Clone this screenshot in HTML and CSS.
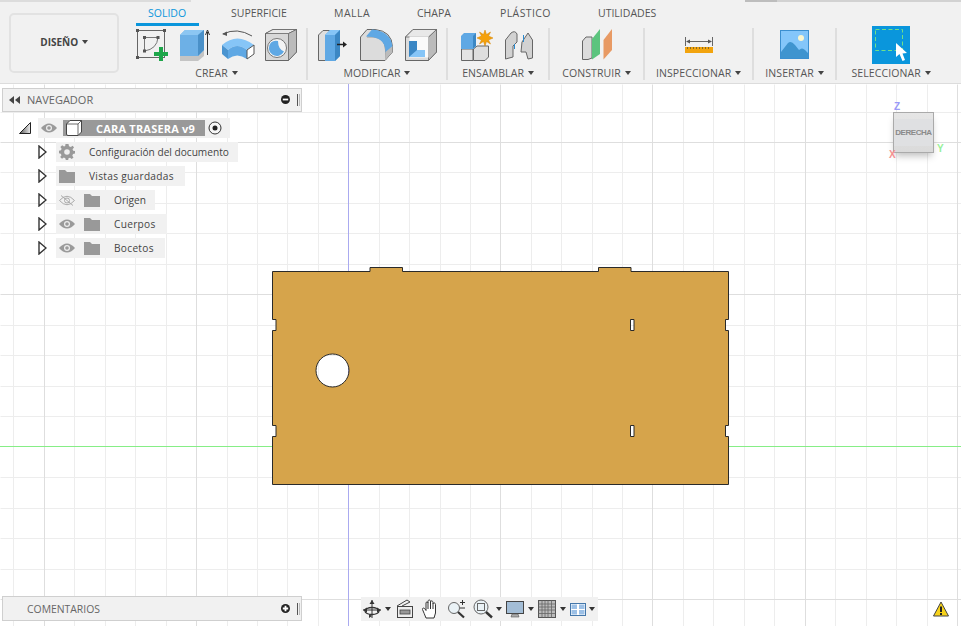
FILE: index.html
```html
<!DOCTYPE html>
<html lang="es">
<head>
<meta charset="utf-8">
<title>Diseño</title>
<link rel="stylesheet" href="styles.css">
</head>
<body>
<header class="toolbar">
  <button class="design-btn">DISEÑO <i class="caret"></i></button>
  <div class="tool-area">
    <nav class="tabs">
      <span class="tab active">SOLIDO</span>
      <span class="tab">SUPERFICIE</span>
      <span class="tab">MALLA</span>
      <span class="tab">CHAPA</span>
      <span class="tab">PLÁSTICO</span>
      <span class="tab">UTILIDADES</span>
    </nav>
    <div class="groups">
      <section class="group g-crear">
        <div class="icons">
          <svg class="ic" viewBox="133 26 36 38"><rect x="136.500" y="30.500" width="27" height="27" fill="none" stroke="#666" stroke-width="1"/><path d="M143.500 37.500H157Q156 49 143.500 51Z" fill="none" stroke="#777" stroke-width="1"/><g fill="#555"><rect x="135" y="29" width="3" height="3"/><rect x="162" y="29" width="3" height="3"/><rect x="135" y="56" width="3" height="3"/><rect x="142" y="36" width="3" height="3"/><rect x="155.500" y="36" width="3" height="3"/><rect x="142" y="49.500" width="3" height="3"/></g><path d="M158 47h4v5h5v4h-5v5h-4v-5h-5v-4h5z" fill="#1ea64a"/></svg>
          <svg class="ic" viewBox="176 26 36 38"><path d="M179 56L197 56L203 50V56L197 61H179Z" fill="#c4c4c4"/><path d="M179 35L184 30H203V50L197 56H179Z" fill="#6db0e6"/><path d="M179 35L184 30H203L197 35Z" fill="#8cc6f2"/><path d="M197 35L203 30V50L197 56Z" fill="#4a90c8"/><path d="M206.500 55V32M204.500 35L206.500 30L208.500 35" fill="none" stroke="#333" stroke-width="1"/></svg>
          <svg class="ic" viewBox="219 26 36 38"><path d="M222 34Q236 27 251 36" fill="none" stroke="#555" stroke-width="1"/><path d="M221 34L226 31.500L226 36Z" fill="#555"/><path d="M221 45Q236 32 253 45L246 50Q236 42 227 50Z" fill="#86c5f7"/><path d="M221 45L227 50V59L221 54Z" fill="#4a94d0"/><path d="M227 50Q236 42 246 50V59Q236 52 227 59Z" fill="#5fa8e4"/><path d="M246 50L253 45V54L246 59Z" fill="#fff" stroke="#555" stroke-width="1"/></svg>
          <svg class="ic" viewBox="262 26 36 38"><path d="M264.500 33.500L272 29.500H295.500V52L287.500 60.500H264.500Z" fill="#d8d8d8" stroke="#666"/><path d="M264.500 33.500L272 29.500H295.500L287.500 33.500Z" fill="#e8e8e8" stroke="#666" stroke-width=".8"/><path d="M287.500 33.500L295.500 29.500V52L287.500 60.500Z" fill="#bbb" stroke="#666" stroke-width=".8"/><circle cx="276" cy="48" r="9.500" fill="#f4f4f4" stroke="#777"/><path d="M270 42.500A8 8 0 1 0 283 51.500Q277 49 277 41A8 8 0 0 0 270 42.500Z" fill="#5fa8e4"/></svg>
        </div>
        <div class="label">CREAR <i class="caret"></i></div>
      </section>
      <div class="sep"></div>
      <section class="group g-mod">
        <div class="icons">
          <svg class="ic" viewBox="316 26 36 38"><path d="M319.500 35L324 30.500H331V60.500H319.500Z" fill="#dedede" stroke="#666"/><path d="M326 35L331 30H341V56L336 61H326Z" fill="#5fa8e4"/><path d="M326 35L331 30H341L336 35Z" fill="#86c5f7"/><path d="M336 35L341 30V56L336 61Z" fill="#3b87c4"/><path d="M338 44.500H345" stroke="#222" stroke-width="1.500"/><path d="M344 41.500L348 44.500L344 47.500Z" fill="#222"/></svg>
          <svg class="ic" viewBox="360 26 36 38"><path d="M361.500 37L368 29.500H376Q393 31 393.500 47V52L386 60.500H361.500Z" fill="#dcdcdc" stroke="#666"/><path d="M368 37H375Q386 38 386.500 50V60" fill="none" stroke="#999"/><path d="M373 29.500Q392 31 393.500 47L386.500 53Q387 39 373 37L367 36.500Z" fill="#5fa8e4"/><path d="M386.500 52L393.500 46V52L386 60.500Z" fill="#bbb"/></svg>
          <svg class="ic" viewBox="402 26 36 38"><path d="M404.500 37L412 29.500H435.500V52L427.500 60.500H404.500Z" fill="#dcdcdc" stroke="#666"/><path d="M427.500 37L435.500 29.500V52L427.500 60.500Z" fill="#bbb" stroke="#666" stroke-width=".8"/><path d="M404.500 37L412 29.500H435.500L427.500 37Z" fill="#e8e8e8" stroke="#666" stroke-width=".8"/><rect x="408.500" y="36.500" width="19" height="21" fill="#fafafa"/><path d="M408 41H416V50H424V57H408Z" fill="#3b87c4"/><path d="M416 50H424V57H408Z" fill="#86c5f7"/></svg>
        </div>
        <div class="label">MODIFICAR <i class="caret"></i></div>
      </section>
      <div class="sep"></div>
      <section class="group g-ens">
        <div class="icons">
          <svg class="ic" viewBox="459 26 36 38"><path d="M461.500 49H473V60.500H461.500Z" fill="#e4e4e4" stroke="#666"/><path d="M473.500 49L477 46H488.500V57L485 60.500H473.500Z" fill="#dedede" stroke="#666"/><path d="M461 36L464 33H476V46L473 49H461Z" fill="#5fa8e4"/><path d="M473 36L476 33V46L473 49Z" fill="#3b87c4"/><path d="M485 30L486.500 34.500L490.500 32L488.500 36L493 38L488.500 40L490.500 44L486.500 41.500L485 46L483.500 41.500L479.500 44L481.500 40L477 38L481.500 36L479.500 32L483.500 34.500Z" fill="#f5a10a" stroke="#d08000" stroke-width=".5"/></svg>
          <svg class="ic" viewBox="503 26 36 38"><path d="M506.500 40L512 33Q516 30 518 34V42L514 46V57L506.500 59Z" fill="#d2d2d2" stroke="#666"/><path d="M523 42L529 33L533.500 40V58L529 59L527 52H522Z" fill="#d2d2d2" stroke="#666"/><path d="M515.500 44V49M524.500 35V42" stroke="#2a8ad0" stroke-width="1"/></svg>
        </div>
        <div class="label">ENSAMBLAR <i class="caret"></i></div>
      </section>
      <div class="sep"></div>
      <section class="group g-con">
        <div class="icons">
          <svg class="ic" viewBox="579 26 36 38"><path d="M582.500 41L586 37H592V58L588 59.500H582.500Z" fill="#dcdcdc" stroke="#666"/><path d="M592 39L600 29V54L592 59.500Z" fill="#5cc47e"/><path d="M603.500 40L612 29V50L603.500 59.500Z" fill="#e89a64"/></svg>
        </div>
        <div class="label">CONSTRUIR <i class="caret"></i></div>
      </section>
      <div class="sep"></div>
      <section class="group g-ins">
        <div class="icons">
          <svg class="ic" viewBox="680 26 36 38"><path d="M684.500 37V46M711.500 37V46M686 41.500H710" stroke="#666" stroke-width="1" fill="none"/><path d="M689 39.500L685 41.500L689 43.500ZM707 39.500L711 41.500L707 43.500Z" fill="#555"/><rect x="684" y="47" width="28" height="6" fill="#f2a40e"/><path d="M686.500 47v2M689.500 47v2M692.500 47v2M695.500 47v2M698.500 47v2M701.500 47v2M704.500 47v2M707.500 47v2" stroke="#8a6a20" stroke-width="1"/></svg>
        </div>
        <div class="label">INSPECCIONAR <i class="caret"></i></div>
      </section>
      <div class="sep"></div>
      <section class="group g-ind">
        <div class="icons">
          <svg class="ic" viewBox="777 26 36 38"><rect x="780.500" y="30.500" width="28" height="28" fill="#84c6fa" stroke="#3b8fd0"/><circle cx="801" cy="38" r="3" fill="#fbf6cf"/><path d="M781 52L788 43Q791 40 795 45L799 50Q802 47 805 50L808 53V58H781Z" fill="#3f94cf"/></svg>
        </div>
        <div class="label">INSERTAR <i class="caret"></i></div>
      </section>
      <div class="sep"></div>
      <section class="group g-sel">
        <div class="icons">
          <svg class="ic ic-sel" viewBox="872 26 38 38"><rect x="872" y="26" width="38" height="38" fill="#0a96dc"/><rect x="875.500" y="29.500" width="27" height="21" fill="none" stroke="#6fe08a" stroke-width="1" stroke-dasharray="4 2.500"/><path d="M896 43V57L899.500 54L902.500 61L905 60L902.500 53.500L907 53Z" fill="#fff"/></svg>
        </div>
        <div class="label">SELECCIONAR <i class="caret"></i></div>
      </section>
    </div>
  </div>
</header>

<main class="viewport">
  <svg class="scene" viewBox="0 84 961 542">
    <path class="grid-minor" d="M13 84V626M74 84V626M105 84V626M135 84V626M166 84V626M227 84V626M257 84V626M287 84V626M318 84V626M379 84V626M409 84V626M440 84V626M470 84V626M531 84V626M561 84V626M592 84V626M622 84V626M683 84V626M713 84V626M744 84V626M774 84V626M835 84V626M866 84V626M896 84V626M927 84V626M0 112H961M0 172H961M0 203H961M0 233H961M0 264H961M0 325H961M0 355H961M0 386H961M0 416H961M0 477H961M0 508H961M0 538H961M0 569H961" transform="translate(.5 .5)"/>
    <path class="grid-major" d="M44 84V626M196 84V626M500 84V626M652 84V626M805 84V626M957 84V626M0 142H961M0 294H961M0 599H961" transform="translate(.5 .5)"/>
    <path class="axis-green" d="M0 446.500H961"/>
    <path class="axis-blue" d="M348.500 84V626"/>
    <path class="part" fill-rule="evenodd" d="M272.500 271.500H370V267.500H402.500V271.500H598.500V267.500H631V271.500H728.500V319.500H725.500V330.500H728.500V425.500H725.500V436.500H728.500V484.500H272.500V436.500H276V425.500H272.500V330.500H276V319.500H272.500Z M630.500 319.500V330.500H634V319.500Z M630.500 425.500V436.500H634V425.500Z M349 370.500A16.500 16.500 0 1 0 316 370.500A16.500 16.500 0 1 0 349 370.500Z"/>
  </svg>

  <aside class="nav-panel panel">
    <svg class="i-rew" viewBox="0 0 12 8"><path d="M6 0V8L1 4ZM12 0V8L7 4Z"/></svg>
    <span class="panel-title">NAVEGADOR</span>
    <svg class="i-pm" viewBox="0 0 10 10"><circle cx="5" cy="5" r="5"/><rect x="2" y="4" width="6" height="2" fill="#fff"/></svg>
    <i class="grip"></i>
  </aside>

  <div class="tree">
    <div class="root-row">
      <svg class="root-tri" viewBox="0 0 12 12"><defs><linearGradient id="tri" x1="0" x2="1" y1="0" y2="0"><stop offset="0" stop-color="#555"/><stop offset="1" stop-color="#eee"/></linearGradient></defs><path d="M.5 11.500L11.500 .5V11.500Z" fill="url(#tri)" stroke="#222"/></svg>
      <div class="root-pill">
        <svg class="i-eye" viewBox="0 0 16 10"><path d="M0 5Q8 -4 16 5Q8 14 0 5Z" fill="#9a9a9a"/><circle cx="8" cy="5" r="3" fill="#eee"/><circle cx="8" cy="5" r="1.800" fill="#9a9a9a"/></svg>
        <div class="root-name">
          <svg class="i-cube" viewBox="0 0 16 16"><path d="M.5 4L4 .5H15.500V12L12 15.500H2Q.5 15.500 .5 14Z" fill="#fff" stroke="#444"/><path d="M.5 4H12V15.500M12 4L15.500 .5" fill="none" stroke="#444" stroke-width=".8"/></svg>
          <span>CARA TRASERA v9</span>
        </div>
        <svg class="i-radio" viewBox="0 0 14 14"><circle cx="7" cy="7" r="6" fill="#f6f6f6" stroke="#333"/><circle cx="7" cy="7" r="2.500" fill="#222"/></svg>
      </div>
    </div>
    <div class="row">
      <svg class="exp" viewBox="0 0 9 14"><path d="M1 1L8 7L1 13Z"/></svg>
      <div class="pill">
        <svg class="i-gear" viewBox="0 0 16 16"><path d="M6.500 0H9.500L10 2.300L11.800 3L13.700 1.700L15 3.500L13.500 5.200L14.200 6.700L16 7V9.500L14 10L13.300 11.700L14.500 13.500L12.700 15L11 13.700L9.500 14.300L9.200 16H6.800L6.300 14.200L4.800 13.600L3 14.800L1.200 13L2.500 11.200L1.800 9.700L0 9.300V6.700L2 6.200L2.600 4.700L1.400 3L3.200 1.300L5 2.500L6.200 2Z" fill="#999"/><circle cx="8" cy="8" r="2.800" fill="#eee"/></svg>
        <span class="pill-text">Configuración del documento</span>
      </div>
    </div>
    <div class="row">
      <svg class="exp" viewBox="0 0 9 14"><path d="M1 1L8 7L1 13Z"/></svg>
      <div class="pill">
        <svg class="i-folder" viewBox="0 0 16 13"><path d="M0 0H6L8 2H16V13H0Z" fill="#999"/></svg>
        <span class="pill-text wide">Vistas guardadas</span>
      </div>
    </div>
    <div class="row">
      <svg class="exp" viewBox="0 0 9 14"><path d="M1 1L8 7L1 13Z"/></svg>
      <div class="pill">
        <svg class="i-eye-off" viewBox="0 0 16 11"><path d="M.5 5.500Q8 -3 15.500 5.500Q8 14 .5 5.500Z" fill="none" stroke="#aaa"/><circle cx="8" cy="5.500" r="2.500" fill="none" stroke="#aaa"/><path d="M2 .5L14 10.500" stroke="#aaa"/></svg>
        <svg class="i-folder" viewBox="0 0 16 13"><path d="M0 0H6L8 2H16V13H0Z" fill="#999"/></svg>
        <span class="pill-text">Origen</span>
      </div>
    </div>
    <div class="row">
      <svg class="exp" viewBox="0 0 9 14"><path d="M1 1L8 7L1 13Z"/></svg>
      <div class="pill">
        <svg class="i-eye" viewBox="0 0 16 10"><path d="M0 5Q8 -4 16 5Q8 14 0 5Z" fill="#9a9a9a"/><circle cx="8" cy="5" r="3" fill="#eee"/><circle cx="8" cy="5" r="1.800" fill="#9a9a9a"/></svg>
        <svg class="i-folder" viewBox="0 0 16 13"><path d="M0 0H6L8 2H16V13H0Z" fill="#999"/></svg>
        <span class="pill-text wide">Cuerpos</span>
      </div>
    </div>
    <div class="row">
      <svg class="exp" viewBox="0 0 9 14"><path d="M1 1L8 7L1 13Z"/></svg>
      <div class="pill">
        <svg class="i-eye" viewBox="0 0 16 10"><path d="M0 5Q8 -4 16 5Q8 14 0 5Z" fill="#9a9a9a"/><circle cx="8" cy="5" r="3" fill="#eee"/><circle cx="8" cy="5" r="1.800" fill="#9a9a9a"/></svg>
        <svg class="i-folder" viewBox="0 0 16 13"><path d="M0 0H6L8 2H16V13H0Z" fill="#999"/></svg>
        <span class="pill-text wide">Bocetos</span>
      </div>
    </div>
  </div>

  <div class="viewcube">
    <span class="ax ax-z">Z</span>
    <div class="cube-face"><span>DERECHA</span></div>
    <span class="ax ax-x">X</span>
    <span class="ax ax-y">Y</span>
  </div>

  <aside class="comments-panel panel">
    <span class="panel-title">COMENTARIOS</span>
    <svg class="i-pm" viewBox="0 0 10 10"><circle cx="5" cy="5" r="5"/><path d="M2 4H4V2H6V4H8V6H6V8H4V6H2Z" fill="#fff"/></svg>
    <i class="grip"></i>
  </aside>

  <div class="nav-bar">
    <svg class="nb" viewBox="0 0 20 20"><path d="M10 1V19" stroke="#333"/><path d="M1 11H19" stroke="#333"/><path d="M10 1L7.500 5H12.500ZM1 11L5 8.500V13.500ZM19 11L15 8.500V13.500Z" fill="#333"/><ellipse cx="10" cy="12" rx="7" ry="3.500" fill="none" stroke="#333" stroke-width="1.300"/><path d="M7 15V19L10 17Z" fill="#333"/></svg>
    <i class="caret c-dark"></i>
    <svg class="nb nb-cap" viewBox="0 0 20 20"><path d="M2 7L12 1L15 3L7 7" fill="none" stroke="#444"/><rect x="2.500" y="7.500" width="15" height="11" fill="#eee" stroke="#444"/><rect x="5" y="11" width="10" height="4" fill="#999" stroke="#444" stroke-width=".8"/></svg>
    <svg class="nb nb-hand" viewBox="0 0 20 20"><path d="M5 19Q3 14 1.500 10.500C1 9 3 8.500 4 10L5 11.500V4C5 2.500 7 2.500 7 4V2.500C7 .5 9.500 .5 9.500 2.500V3C9.500 1.500 12 1.500 12 3.500V5C12 3.500 14.500 3.500 14.500 5.500V14L13 19Z" fill="#fff" stroke="#333" stroke-linejoin="round"/><path d="M7 4V10M9.500 3V10M12 5V10" stroke="#333"/></svg>
    <svg class="nb nb-zoom" viewBox="0 0 20 20"><circle cx="8" cy="9" r="5.500" fill="#eaf2f6" stroke="#666"/><path d="M12 13L18 18.500" stroke="#333" stroke-width="2.200"/><path d="M14 3.500H19M16.500 1V6M14 9H19" stroke="#333"/></svg>
    <svg class="nb nb-fit" viewBox="0 0 20 20"><circle cx="8" cy="8" r="7" fill="#eaf2f6" stroke="#666"/><rect x="4.500" y="4.500" width="7" height="7" fill="none" stroke="#666"/><path d="M13 13L19 18.500" stroke="#333" stroke-width="2.400"/></svg>
    <i class="caret c-dark"></i>
    <svg class="nb nb-disp" viewBox="0 0 20 20"><rect x="1.500" y="2.500" width="17" height="12" fill="#a3bdd6" stroke="#444"/><path d="M7 15H13L14 18H6Z" fill="#aaa" stroke="#555" stroke-width=".6"/></svg>
    <i class="caret c-dark"></i>
    <svg class="nb nb-grid" viewBox="0 0 20 20"><rect x="1.500" y="1.500" width="17" height="17" fill="#bbb" stroke="#555"/><path d="M5 1.500V18.500M8 1.500V18.500M11 1.500V18.500M14.500 1.500V18.500M1.500 5H18.500M1.500 8H18.500M1.500 11H18.500M1.500 14.500H18.500" stroke="#666" stroke-width=".8"/></svg>
    <i class="caret c-dark"></i>
    <svg class="nb nb-vp" viewBox="0 0 20 20"><rect x="2.500" y="4.500" width="15" height="12" fill="#fff" stroke="#47a"/><path d="M3.500 5.500H9V10H3.500ZM11 5.500H16.500V10H11ZM3.500 11H9V15.500H3.500ZM11 11H16.500V15.500H11Z" fill="#9cc0e6"/></svg>
    <i class="caret c-dark"></i>
  </div>

  <svg class="warn" viewBox="0 0 16 16"><path d="M8 1L15.500 15H.5Z" fill="#f7d21a" stroke="#444" stroke-linejoin="round"/><rect x="7" y="5.500" width="2" height="5.500" fill="#222"/><rect x="7" y="12" width="2" height="2" fill="#222"/></svg>
</main>
</body>
</html>
```
FILE: styles.css
```css
* { box-sizing: border-box; }
html, body { margin: 0; padding: 0; }
body {
  width: 961px;
  height: 626px;
  overflow: hidden;
  background: #fff;
  font-family: "Open Sans", "Liberation Sans", sans-serif;
  display: flex;
  flex-direction: column;
}

/* Toolbar */
.toolbar {
  flex: 0 0 84px;
  display: flex;
  padding-left: 9px;
  background-color: #f1f1f1;
  background-image:
    linear-gradient(#dcdcdc, #dcdcdc),
    linear-gradient(#bdbdbd, #bdbdbd),
    linear-gradient(#d2d2d2, #d2d2d2);
  background-size: 191px 2px, 32px 2px, 184px 2px;
  background-position: 0 0, 745px 0, 777px 0;
  background-repeat: no-repeat;
  border-bottom: 1px solid #dcdcdc;
}
.design-btn {
  width: 110px;
  height: 60px;
  margin-top: 13px;
  background: #f1f1f1;
  border: 2px solid #e2e2e2;
  border-radius: 5px;
  font: 700 10px "Open Sans", "Liberation Sans", sans-serif;
  color: #444;
  padding: 0 0 2px;
}
.caret {
  display: inline-block;
  width: 0;
  height: 0;
  border-left: 3px solid transparent;
  border-right: 3px solid transparent;
  border-top: 4px solid #444;
  vertical-align: 2px;
  margin-left: 1px;
}
.tool-area { margin-left: 8px; flex: 1; }
.tabs {
  height: 26px;
  display: flex;
  padding-left: 9px;
}
.tab {
  flex: none;
  width: 83px;
  padding: 6px 0 0 12px;
  height: 26px;
  font-size: 10.5px;
  line-height: 14px;
  color: #555;
  white-space: nowrap;
}
.tab:nth-child(2) { width: 103px; }
.tab:nth-child(3) { letter-spacing: .5px; }
.tab:nth-child(5) { width: 98px; letter-spacing: .4px; }
.tab.active {
  width: 63px;
  margin-right: 20px;
  color: #0a96dc;
  border-bottom: 3px solid #0a96dc;
}
.groups { display: flex; height: 54px; }
.group { display: flex; flex-direction: column; align-items: center; }
.g-crear { width: 179px; }
.g-mod { width: 138px; }
.g-ens { width: 100px; }
.g-con { width: 93px; }
.g-ins { width: 107px; }
.g-ind { width: 81px; }
.g-sel { width: 108px; }
.sep { width: 2px; margin-top: 2px; height: 52px; background: #dedede; }
.icons { display: flex; gap: 7px; height: 38px; }
.g-mod .icons { gap: 8px; }
.ic { width: 36px; height: 38px; display: block; }
.ic-sel { width: 38px; }
.label {
  margin-top: 2px;
  font-size: 10.5px;
  line-height: 14px;
  letter-spacing: .1px;
  color: #555;
  white-space: nowrap;
}

/* Viewport */
.viewport { position: relative; flex: 1; min-height: 0; }
.scene { position: absolute; left: 0; top: 0; width: 961px; height: 542px; }
.grid-minor { stroke: #ededed; stroke-width: 1; fill: none; }
.grid-major { stroke: #dedede; stroke-width: 1; fill: none; }
.axis-green { stroke: #86ee86; stroke-width: 1; }
.axis-blue { stroke: #aaaaf0; stroke-width: 1; }
.part { fill: #d6a44b; stroke: #2a2a2a; stroke-width: 1; }

.panel {
  position: absolute;
  left: 2px;
  width: 300px;
  display: flex;
  align-items: center;
  background: #f1f1f1;
  border: 1px solid #cfcfcf;
}
.nav-panel { top: 4px; height: 24px; padding-left: 5px; padding-bottom: 1px; }
.comments-panel { top: 512px; height: 25px; padding-left: 24px; }
.panel-title { font-size: 10.4px; color: #666; flex: 1; }
.nav-panel .panel-title { margin-left: 7px; font-size: 11px; }
.i-rew { width: 12px; height: 8px; fill: #444; }
.i-pm { width: 9px; height: 9px; fill: #222; margin-right: 7px; }
.grip { width: 3px; height: 12px; border-left: 1px solid #555; border-right: 1px solid #bbb; margin-right: 1px; }

.tree { position: absolute; left: 19px; top: 34px; display: flex; flex-direction: column; gap: 4px; }
.root-row { display: flex; align-items: center; height: 20px; }
.root-tri { width: 12px; height: 12px; margin-right: 7px; }
.root-pill { display: flex; align-items: center; width: 192px; height: 20px; background: #f1f1f1; padding-left: 3px; }
.i-eye { width: 16px; height: 10px; flex: none; }
.i-eye-off { width: 16px; height: 11px; flex: none; }
.root-name {
  display: flex;
  align-items: center;
  width: 142px;
  height: 16px;
  margin-left: 6px;
  background: #999;
  color: #fff;
  font-size: 11px;
  font-weight: 700;
  letter-spacing: .2px;
  padding-left: 3px;
}
.root-name span { margin-left: 14px; white-space: nowrap; }
.i-cube { width: 16px; height: 16px; flex: none; }
.i-radio { width: 14px; height: 14px; margin-left: 3px; }

.row { display: flex; align-items: center; height: 20px; padding-left: 19px; }
.exp { width: 9px; height: 14px; fill: #fff; stroke: #333; stroke-width: 1.400; margin-right: 9px; flex: none; }
.pill { display: flex; align-items: center; height: 20px; background: #f1f1f1; padding: 0 9px 0 3px; gap: 9px; }
.i-gear { width: 16px; height: 16px; flex: none; }
.i-folder { width: 16px; height: 13px; flex: none; }
.pill-text { font-size: 10.15px; color: #444; white-space: nowrap; margin-left: 5px; }
.pill-text.wide { letter-spacing: .3px; padding-right: 2px; }

/* View cube */
.viewcube { position: absolute; left: 885px; top: 16px; width: 62px; height: 64px; }
.cube-face {
  position: absolute;
  left: 8px;
  top: 12px;
  width: 41px;
  height: 41px;
  background: linear-gradient(#e6e6e6, #dadada);
  border: 1px solid #aaa;
  box-shadow: 0 5px 7px -2px rgba(0,0,0,.25);
  display: flex;
  align-items: center;
  justify-content: center;
}
.cube-face span {
  font: 700 8px "Liberation Sans Narrow", "Liberation Sans", sans-serif;
  color: #8a8a8a;
  letter-spacing: -.45px;
  background: #dfe0e2;
  padding: 9px 1px;
}
.ax { position: absolute; font: 700 10px "Liberation Sans", sans-serif; }
.ax-z { left: 9px; top: 1px; color: #9a9af8; }
.ax-x { left: 4px; top: 49px; color: #f59090; }
.ax-y { left: 52px; top: 43px; color: #98f098; }

/* Bottom nav bar */
.nav-bar {
  position: absolute;
  left: 361px;
  top: 513px;
  width: 237px;
  height: 24px;
  display: flex;
  align-items: center;
  background: #f1f1f1;
  padding-left: 1px;
}
.nb { width: 20px; height: 20px; flex: none; }
.c-dark { border-top-color: #333; margin-left: 3px; flex: none; }
.nb-cap { margin-left: 4px; }
.nb-hand { margin-left: 6px; }
.nb-zoom { margin-left: 5px; }
.nb-fit { margin-left: 7px; }
.nb-disp { margin-left: 3px; }
.nb-grid { margin-left: 3px; }
.nb-vp { margin-left: 2px; }
.c-dark:last-child { margin-left: 1px; }

.warn { position: absolute; left: 933px; top: 517px; width: 16px; height: 16px; }
```
